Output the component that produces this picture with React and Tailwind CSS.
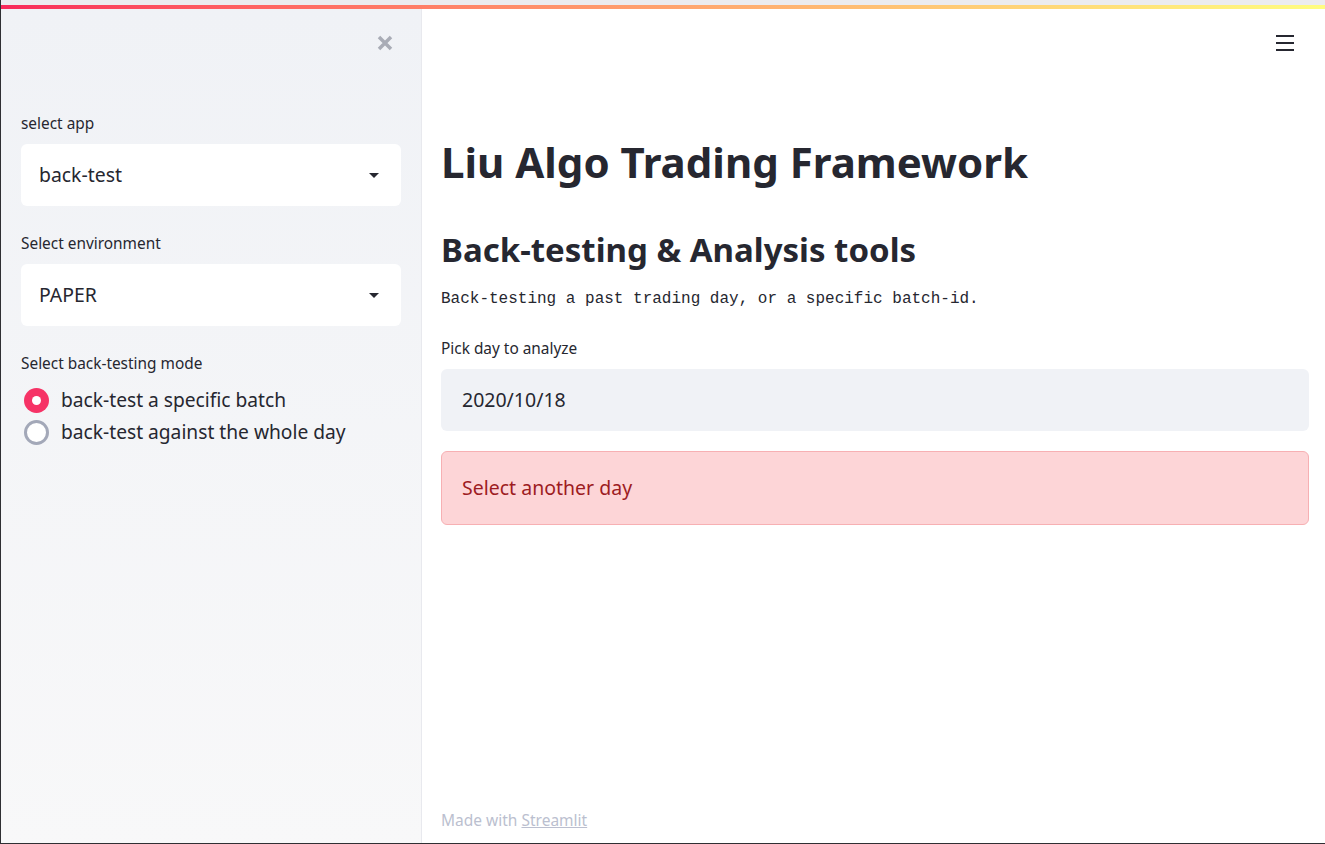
import React, { useState } from 'react';

const SelectBox = ({ value }) => (
  <div className="mt-[9px] h-[62px] w-full rounded-md bg-white flex items-center justify-between pl-[18px] pr-[22px]">
    <span className="text-[19.4px] text-[#262730]">{value}</span>
    <svg width="10" height="5" viewBox="0 0 10 5" className="text-[#262730]">
      <path d="M0 0h10L5 5z" fill="currentColor" />
    </svg>
  </div>
);

const Radio = ({ label, checked, onClick }) => (
  <div className="flex items-center h-[32px] cursor-pointer" onClick={onClick}>
    <span
      className={`ml-[3px] w-[25px] h-[25px] rounded-full flex items-center justify-center ${
        checked ? 'bg-[#f63366]' : 'border-[3px] border-[#a3a8b8] bg-white'
      }`}
    >
      {checked && <span className="w-[9px] h-[9px] rounded-full bg-white" />}
    </span>
    <span className="ml-[12px] text-[19.2px] text-[#262730]">{label}</span>
  </div>
);

export default function App() {
  const [mode, setMode] = useState(0);

  return (
    <div className="w-[1325px] h-[844px] flex flex-col overflow-hidden border-l border-b border-[#2f2f33] font-['Noto_Sans','Open_Sans',sans-serif] text-[#262730]">
      <div className="h-[5px] shrink-0 bg-[#ececef]" />
      <div className="h-[4px] shrink-0 bg-linear-to-r from-[#f8285a] to-[#fffd80]" />

      <div className="flex flex-1 min-h-0">
        {/* sidebar */}
        <aside className="w-[420px] shrink-0 bg-linear-to-b from-[#f0f2f6] to-[#f8f8f9] px-[20px] flex flex-col">
          <div className="mt-[26px] h-[16px] flex justify-end pr-[8px]">
            <svg width="16" height="16" viewBox="0 0 16 16">
              <path d="M2 2l12 12M14 2L2 14" stroke="#a9acb6" strokeWidth="3.5" />
            </svg>
          </div>

          <label className="mt-[62px] text-[15.4px] leading-[22px]">select app</label>
          <SelectBox value="back-test" />

          <label className="mt-[27px] text-[15.4px] leading-[22px]">Select environment</label>
          <SelectBox value="PAPER" />

          <label className="mt-[27px] text-[15.4px] leading-[22px]">Select back-testing mode</label>
          <div className="mt-[9px] flex flex-col">
            <Radio label="back-test a specific batch" checked={mode === 0} onClick={() => setMode(0)} />
            <Radio label="back-test against the whole day" checked={mode === 1} onClick={() => setMode(1)} />
          </div>
        </aside>

        {/* main */}
        <main className="relative flex-1 border-l border-[#e8e9ee] bg-white pl-[19px] pr-[16px] flex flex-col">
          <button className="absolute top-[26px] right-[31px] w-[18px] h-[16px] flex flex-col justify-between">
            <span className="h-[2px] w-full bg-[#262730]" />
            <span className="h-[2px] w-full bg-[#262730]" />
            <span className="h-[2px] w-full bg-[#262730]" />
          </button>

          <h1 className="mt-[128px] text-[42px] leading-[50px] font-bold">
            Liu Algo Trading Framework
          </h1>
          <h2 className="mt-[42px] text-[33px] leading-[41px] font-bold">
            Back-testing &amp; Analysis tools
          </h2>
          <p className="mt-[17px] text-[16px] leading-[24px] font-['Liberation_Mono',monospace]">
            Back-testing a past trading day, or a specific batch-id.
          </p>

          <label className="mt-[27px] text-[15.4px] leading-[22px]">Pick day to analyze</label>
          <div className="mt-[9px] h-[62px] rounded-md bg-[#f0f2f6] flex items-center pl-[21px]">
            <span className="text-[19.5px]">2020/10/18</span>
          </div>

          <div className="mt-[20px] h-[74px] rounded-md border border-[#f7b0b3] bg-[#fdd5d7] flex items-center pl-[20px]">
            <span className="text-[19.5px] text-[#9d1c22]">Select another day</span>
          </div>

          <div className="mt-auto pb-[11px] text-[15.5px] leading-[24px] text-[#bbbfcf]">
            Made with <span className="underline">Streamlit</span>
          </div>
        </main>
      </div>
    </div>
  );
}
